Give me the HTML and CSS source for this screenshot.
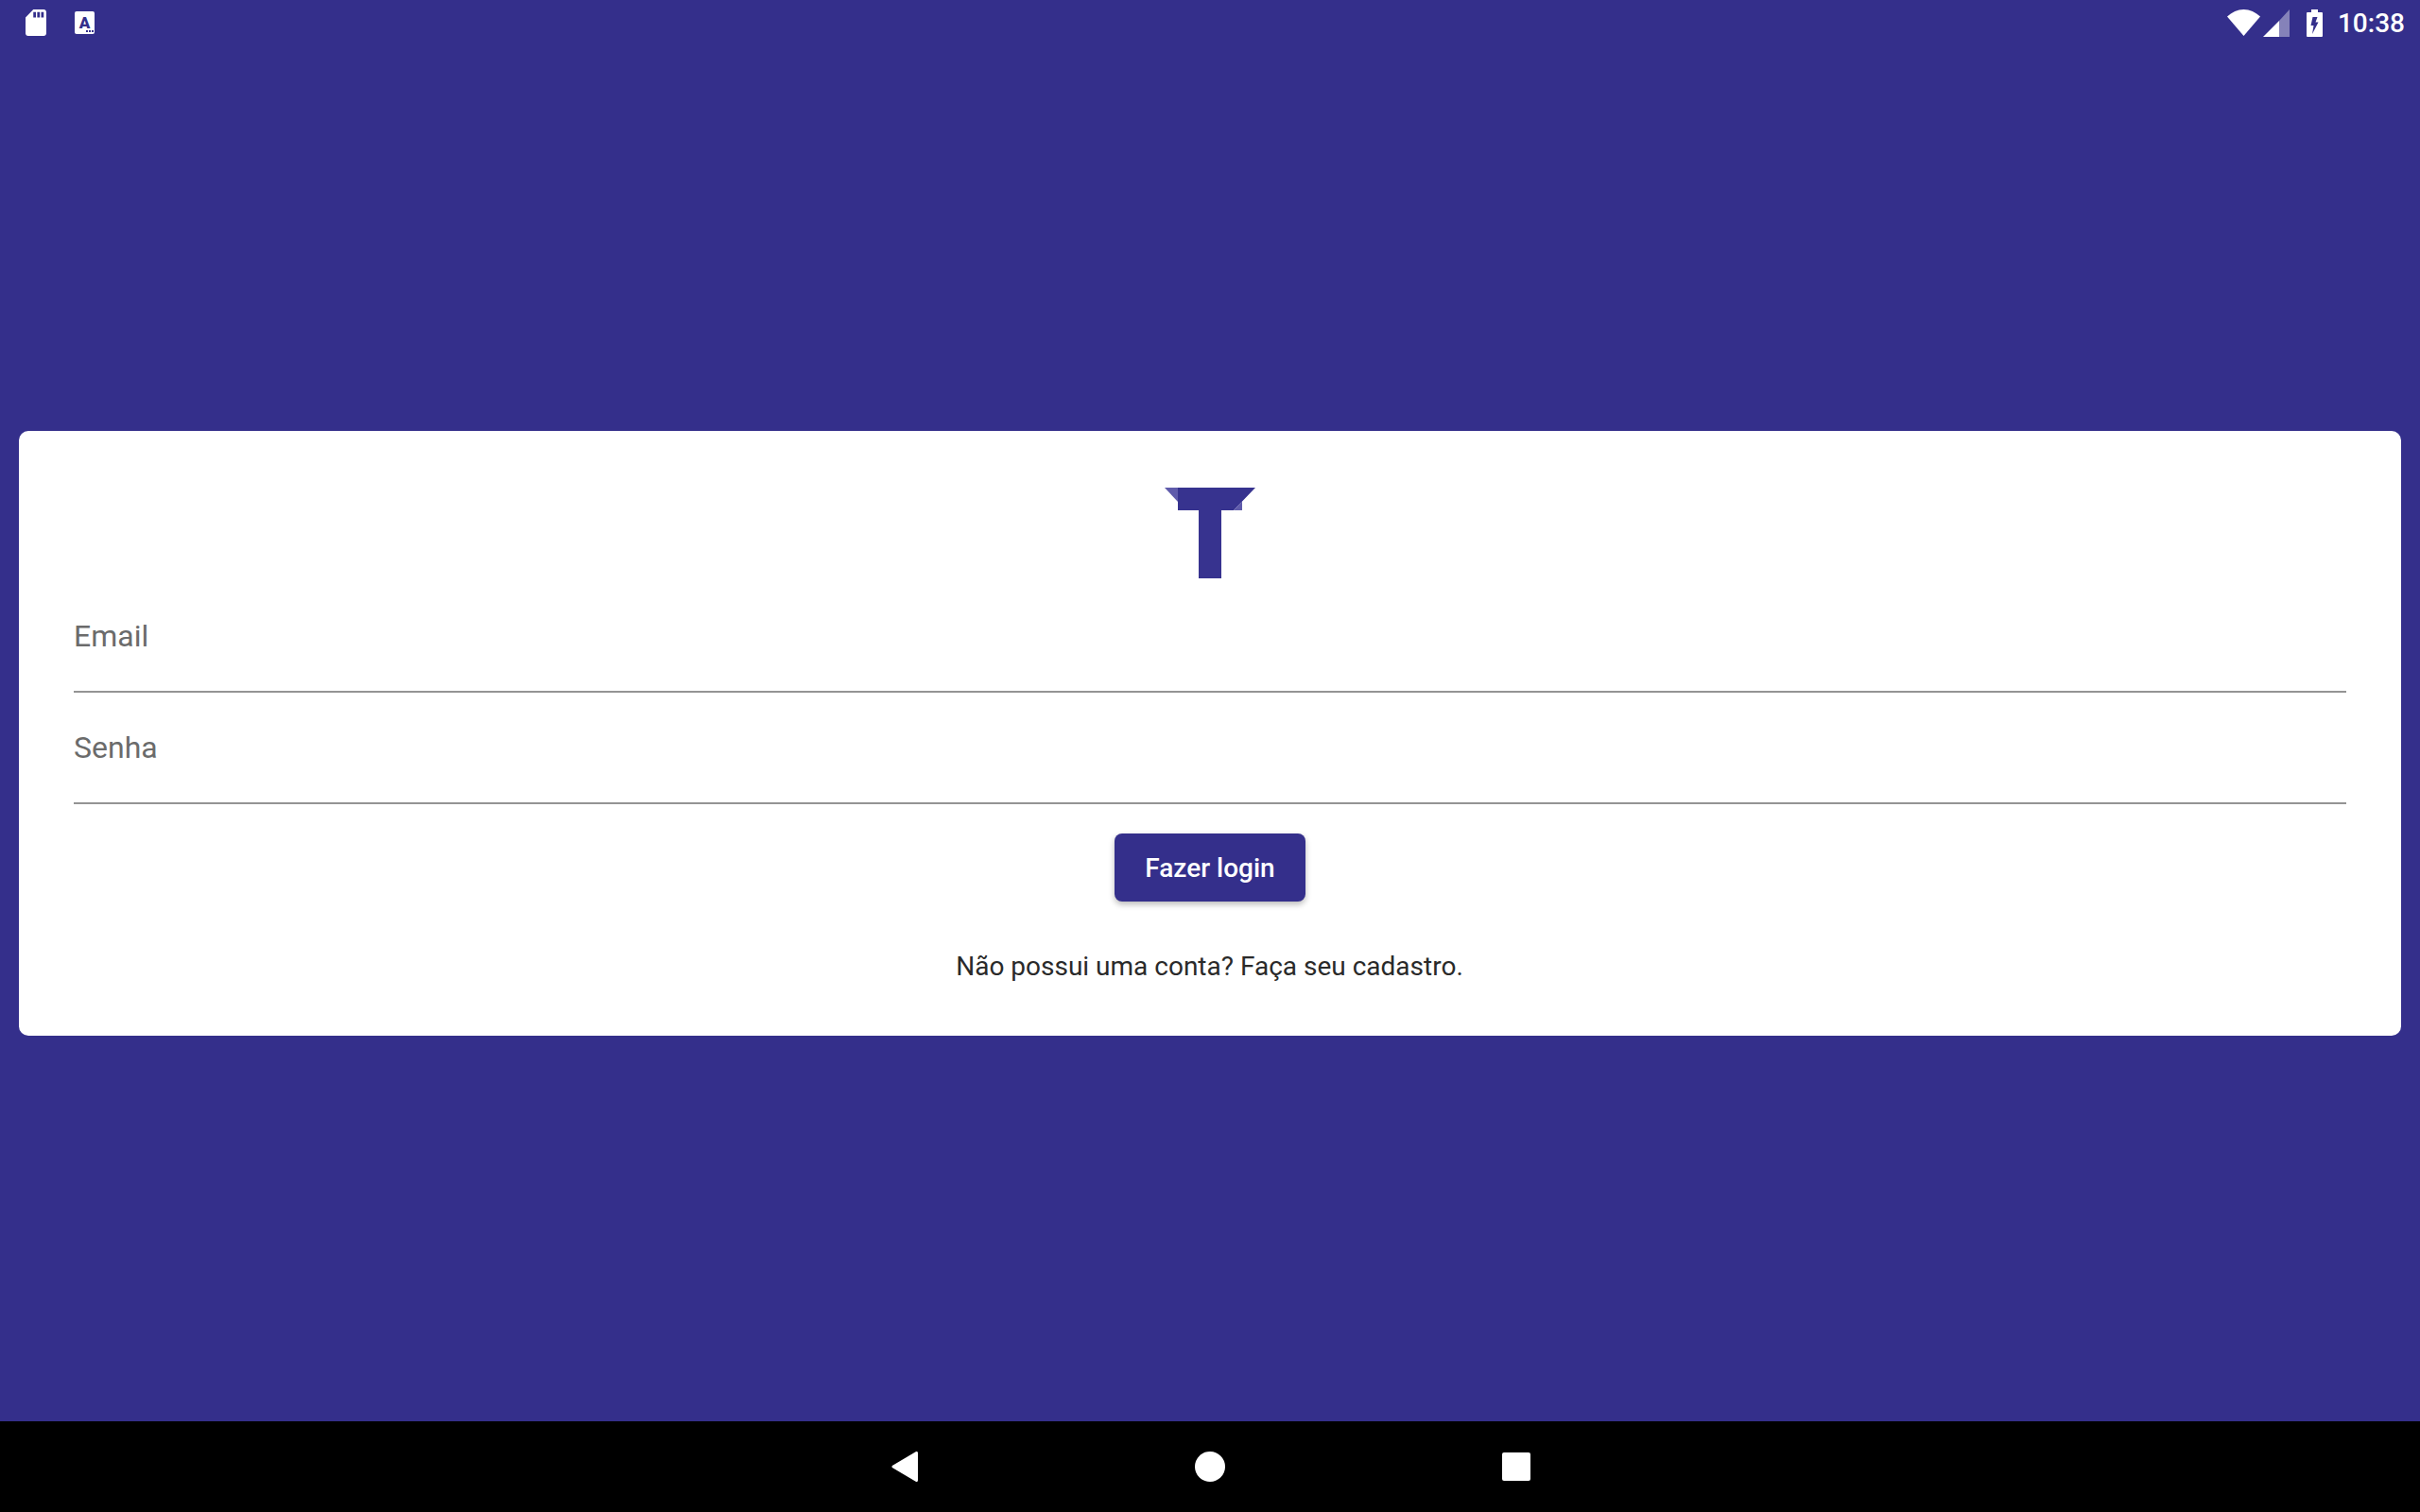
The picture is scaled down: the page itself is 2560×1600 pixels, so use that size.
FILE: index.html
```html
<!DOCTYPE html>
<html lang="pt-BR">
<head>
    <meta charset="UTF-8">
    <title>Login</title>
    <link rel="stylesheet" href="styles.css">
</head>
<body>
    <div class="status-bar">
        <div class="status-left">
            <svg class="icon-sd" viewBox="4 2 16 20" preserveAspectRatio="none"><path fill="#fff" d="M18 2h-8L4.020 8 4 20c0 1.100.9 2 2 2h12c1.100 0 2-.9 2-2V4c0-1.100-.9-2-2-2zm-6 6h-2V4h2v4zm3 0h-2V4h2v4zm3 0h-2V4h2v4z"/></svg>
            <svg class="icon-a" viewBox="0 0 21 24">
                <rect width="21" height="24" rx="2" fill="#fff"/>
                <text x="10.500" y="18" class="icon-a-text" text-anchor="middle">A</text>
                <rect x="12" y="20" width="2" height="2" fill="#342f8b"/>
                <rect x="15" y="20" width="2" height="2" fill="#342f8b"/>
                <rect x="18" y="20" width="2" height="2" fill="#342f8b"/>
            </svg>
        </div>
        <div class="status-right">
            <svg class="icon-wifi" viewBox="0 0 35 28"><path fill="#fff" d="M17.500 28 0 7.500C5 3 11 0 17.500 0S30 3 35 7.500z"/></svg>
            <svg class="icon-signal" viewBox="0 0 28 29">
                <path fill="#fff" d="M0 29 17 12v17z"/>
                <path fill="#fff" fill-opacity=".4" d="M17 12 28 0v29H17z"/>
            </svg>
            <svg class="icon-battery" viewBox="0 0 17 29">
                <path fill="#fff" d="M5 0h7v3h4a1 1 0 0 1 1 1v24a1 1 0 0 1-1 1H1a1 1 0 0 1-1-1V4a1 1 0 0 1 1-1h4z"/>
                <path fill="#342f8b" d="M6.500 8h5l-2 5.500h3L6 26l1.500-9h-3z"/>
            </svg>
            <span class="clock">10:38</span>
        </div>
    </div>

    <main class="content">
        <div class="card">
            <svg class="logo" viewBox="0 0 96 96">
                <path fill="#5f5bab" d="M0 0h14v15z"/>
                <path fill="#37338f" d="M14 0h82L73 24H60v72H36V24H14z"/>
                <path fill="#5f5bab" d="M82 14.500V24h-9z"/>
            </svg>
            <div class="field"><span class="field-label">Email</span></div>
            <div class="field"><span class="field-label">Senha</span></div>
            <button class="submit" type="button">Fazer login</button>
            <p class="signup">Não possui uma conta? Faça seu cadastro.</p>
        </div>
    </main>

    <div class="nav-bar">
        <svg class="nav-back" viewBox="0 0 28 32"><path fill="#fff" stroke="#fff" stroke-width="3" stroke-linejoin="round" d="M2 16 26.500 1.500v29z"/></svg>
        <span class="nav-home"></span>
        <span class="nav-recent"></span>
    </div>
</body>
</html>
```

FILE: styles.css
```css
* {
    box-sizing: border-box;
    margin: 0;
    padding: 0;
}

body {
    width: 2560px;
    height: 1600px;
    display: flex;
    flex-direction: column;
    background-color: #342f8b;
    font-family: "Roboto", sans-serif;
    overflow: hidden;
}

.status-bar {
    height: 48px;
    flex: none;
    display: flex;
    justify-content: space-between;
    align-items: center;
    padding: 0 16px 0 27px;
}

.status-left,
.status-right {
    display: flex;
    align-items: center;
}

.icon-sd {
    width: 22px;
    height: 28px;
    margin-right: 30px;
}

.icon-a {
    width: 21px;
    height: 24px;
}

.icon-a-text {
    font-family: "Roboto", sans-serif;
    font-weight: 900;
    font-size: 17px;
    fill: #342f8b;
}

.icon-wifi {
    width: 35px;
    height: 28px;
    margin-right: 3px;
}

.icon-signal {
    width: 28px;
    height: 29px;
    margin-right: 18px;
}

.icon-battery {
    width: 17px;
    height: 29px;
    margin-right: 16px;
}

.clock {
    color: #fff;
    font-size: 28px;
    font-weight: 500;
}

.content {
    flex: 1;
    display: flex;
    align-items: center;
    padding: 0 20px;
}

.card {
    width: 100%;
    height: 640px;
    background-color: #fff;
    border-radius: 10px;
    padding: 60px 58px 0;
    display: flex;
    flex-direction: column;
    align-items: center;
}

.logo {
    width: 96px;
    height: 96px;
    flex: none;
    margin-bottom: 3px;
}

.field {
    width: 100%;
    height: 118px;
    border-bottom: 2px solid #949494;
    padding-top: 34px;
}

.field-label {
    font-size: 32px;
    line-height: 48px;
    color: #6b6b6b;
}

.submit {
    width: 202px;
    height: 72px;
    margin-top: 31px;
    border: none;
    border-radius: 8px;
    background-color: #342f8b;
    color: #fff;
    font-family: "Roboto", sans-serif;
    font-size: 28px;
    font-weight: 500;
    box-shadow: 0 3px 6px rgba(0, 0, 0, 0.28);
}

.signup {
    margin-top: 52px;
    margin-right: 1px;
    font-size: 28px;
    line-height: 34px;
    color: #2a2a2a;
}

.nav-bar {
    height: 96px;
    flex: none;
    background-color: #000;
    display: flex;
    justify-content: center;
    align-items: center;
    gap: 293px;
    padding-left: 2px;
}

.nav-back {
    width: 28px;
    height: 32px;
}

.nav-home {
    width: 32px;
    height: 32px;
    border-radius: 50%;
    background-color: #fff;
}

.nav-recent {
    width: 30px;
    height: 30px;
    border-radius: 2px;
    background-color: #fff;
}
```
